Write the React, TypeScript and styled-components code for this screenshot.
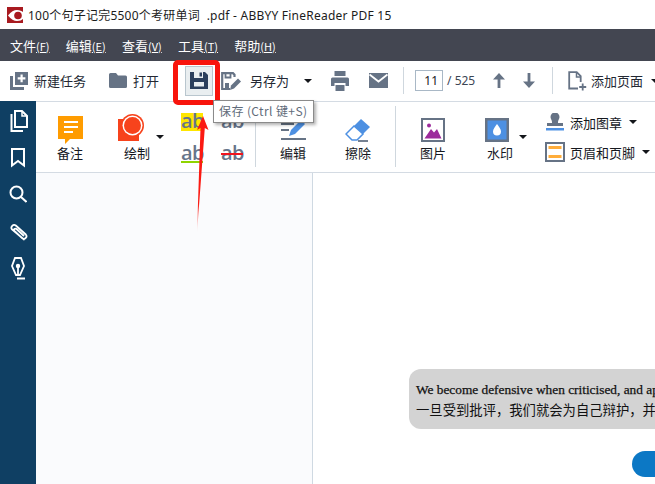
import React from 'react';
import styled, { createGlobalStyle } from 'styled-components';

const UI_FONT = '"Noto Sans CJK SC", "Noto Sans", sans-serif';

const GlobalStyle = createGlobalStyle`
  html, body {
    margin: 0;
    padding: 0;
    background: #fff;
    overflow: hidden;
  }
  body {
    font-family: ${UI_FONT};
  }
`;

const Window = styled.div`
  position: relative;
  width: 655px;
  height: 484px;
  overflow: hidden;
  display: flex;
  flex-direction: column;
`;

const TitleBar = styled.div`
  height: 29px;
  flex: none;
  display: flex;
  align-items: center;
  gap: 5px;
  padding-left: 7px;
  font-family: "Noto Sans", ${UI_FONT};
  font-size: 12px;
  letter-spacing: 0.23px;
  color: #1c1c1c;
  white-space: pre;
`;

const MenuBar = styled.div`
  height: 32px;
  flex: none;
  background: #434651;
  display: flex;
  align-items: center;
  gap: 16.25px;
  padding-left: 10px;
`;

const MenuItem = styled.span`
  color: #fff;
  font-size: 13px;
  white-space: nowrap;
  u {
    text-decoration: underline;
    font-size: 11px;
  }
`;

const Toolbar = styled.div`
  height: 40px;
  flex: none;
  box-sizing: border-box;
  padding: 0 0 1px 10px;
  display: flex;
  align-items: center;
  white-space: nowrap;
`;

const ToolItem = styled.div<{ $left?: number; $gap?: number }>`
  display: flex;
  align-items: center;
  flex: none;
  gap: ${(p) => p.$gap ?? 6}px;
  margin-left: ${(p) => p.$left ?? 0}px;
  font-size: 13px;
  color: #232833;
`;

const SaveButton = styled.div`
  flex: none;
  width: 28px;
  height: 30px;
  margin-left: 26px;
  box-sizing: border-box;
  background: #e9eef0;
  border: 1px solid #b9c6ce;
  display: flex;
  align-items: center;
  justify-content: center;
`;

const Caret = styled.span<{ $left?: number }>`
  flex: none;
  width: 0;
  height: 0;
  margin-left: ${(p) => p.$left ?? 0}px;
  border-left: 4px solid transparent;
  border-right: 4px solid transparent;
  border-top: 4px solid #14161b;
`;

const ToolDivider = styled.span<{ $left: number }>`
  flex: none;
  width: 1px;
  height: 27px;
  margin-left: ${(p) => p.$left}px;
  background: #cfd7de;
`;

const PageInput = styled.div`
  flex: none;
  width: 28px;
  height: 21px;
  margin-left: 11px;
  box-sizing: border-box;
  border: 1px solid #a9b8c6;
  font-family: "Noto Sans", sans-serif;
  font-size: 12px;
  line-height: 19px;
  text-align: right;
  padding-right: 4px;
  color: #222;
`;

const PageCount = styled.span`
  flex: none;
  margin-left: 4px;
  width: 26px;
  font-family: "Noto Sans", sans-serif;
  font-size: 12px;
  color: #3c4554;
`;

const Workspace = styled.div`
  flex: 1;
  display: flex;
  min-height: 0;
`;

const Sidebar = styled.div`
  width: 36px;
  flex: none;
  background: #0f3f63;
  display: flex;
  flex-direction: column;
  align-items: center;
  padding-top: 9px;
`;

const SideIcon = styled.div<{ $top?: number }>`
  display: flex;
  margin-top: ${(p) => p.$top ?? 0}px;
`;

const Main = styled.div`
  flex: 1;
  display: flex;
  flex-direction: column;
  min-width: 0;
`;

const Ribbon = styled.div`
  height: 72px;
  flex: none;
  box-sizing: border-box;
  border-top: 1px solid #d4dbe3;
  border-bottom: 1px solid #d4dbe3;
  display: flex;
  white-space: nowrap;
`;

const RibbonTool = styled.div<{ $width: number; $left: number }>`
  flex: none;
  width: ${(p) => p.$width}px;
  margin-left: ${(p) => p.$left}px;
  height: 100%;
  box-sizing: border-box;
  padding-top: 13px;
  display: flex;
  flex-direction: column;
  align-items: center;
`;

const RibbonIcon = styled.div<{ $aside?: number; $lift?: number }>`
  height: 30px;
  margin: ${(p) => -(p.$lift ?? 0)}px ${(p) => p.$aside ?? 0}px ${(p) => p.$lift ?? 0}px 0;
  display: flex;
  align-items: center;
  justify-content: center;
`;

const RibbonLabel = styled.span`
  margin-top: -1px;
  font-size: 13px;
  line-height: 18px;
  color: #15181e;
`;

const RibbonCaret = styled(Caret)`
  align-self: flex-start;
  margin-top: 33px;
`;

const RibbonDivider = styled.span<{ $left: number }>`
  flex: none;
  width: 1px;
  height: 61px;
  margin: 4px 0 0 ${(p) => p.$left}px;
  background: #cfd7de;
`;

const TextStyles = styled.div`
  flex: none;
  align-self: flex-start;
  margin: 11px 0 0 17px;
  display: grid;
  grid-template-columns: 22px 22px;
  column-gap: 18px;
  row-gap: 14px;
`;

const Sample = styled.span<{ $mark?: boolean; $under?: boolean; $strike?: boolean }>`
  position: relative;
  display: block;
  height: 18px;
  box-sizing: border-box;
  font-family: "Open Sans", "Noto Sans", sans-serif;
  font-size: 20px;
  font-weight: 600;
  line-height: 16px;
  text-align: center;
  letter-spacing: -0.5px;
  color: #67758a;
  background: ${(p) => (p.$mark ? '#ffe600' : 'transparent')};
  border-bottom: ${(p) => (p.$under ? '2px solid #8fd400' : 'none')};
  &::after {
    content: '';
    display: ${(p) => (p.$strike ? 'block' : 'none')};
    position: absolute;
    left: 0;
    right: 0;
    top: 8px;
    height: 2px;
    background: #f0141e;
  }
`;

const StackedTools = styled.div`
  flex: none;
  margin: 7px 0 0 18px;
  display: flex;
  flex-direction: column;
  gap: 4px;
`;

const StackedRow = styled.div`
  display: flex;
  align-items: center;
  height: 26px;
  gap: 5px;
  font-size: 13px;
  color: #15181e;
`;

const StackedIcon = styled.span`
  flex: none;
  width: 20px;
  display: flex;
  justify-content: center;
`;

const Body = styled.div`
  flex: 1;
  display: flex;
  min-height: 0;
`;

const ThumbPanel = styled.div`
  width: 276px;
  flex: none;
  background: #fafbfd;
  border-right: 1px solid #cfd9e2;
`;

const Page = styled.div`
  flex: 1;
  min-width: 0;
  background: #fff;
  overflow: hidden;
  padding-top: 196px;
  padding-left: 96px;
`;

const SentenceCard = styled.div`
  width: 420px;
  height: 60px;
  box-sizing: border-box;
  background: #d3d3d3;
  border-radius: 12px;
  padding: 11px 0 0 7px;
  color: #111;
  white-space: nowrap;
`;

const English = styled.div`
  font-family: "Liberation Serif", serif;
  font-size: 13.33px;
  line-height: 19px;
  -webkit-text-stroke: 0.25px #111;
`;

const Chinese = styled.div`
  font-family: "Noto Sans CJK SC", serif;
  font-size: 13.33px;
  line-height: 21px;
`;

const ActionPill = styled.div`
  width: 80px;
  height: 26px;
  margin: 22px 0 0 223px;
  border-radius: 13px;
  background: #0c78c5;
`;

const SaveHighlight = styled.div`
  position: absolute;
  left: 173px;
  top: 60px;
  width: 47px;
  height: 45px;
  box-sizing: border-box;
  border: 5px solid #f8140c;
  border-radius: 5px;
`;

const Tooltip = styled.div`
  position: absolute;
  left: 213px;
  top: 100px;
  width: 101px;
  height: 23px;
  box-sizing: border-box;
  background: #fff;
  border: 1px solid #8b8b8b;
  box-shadow: 2px 2px 3px rgba(0, 0, 0, 0.3);
  font-size: 12px;
  letter-spacing: 0.4px;
  line-height: 20px;
  padding-left: 5px;
  color: #5f6b7a;
  white-space: pre;
`;

const ArrowOverlay = styled.svg`
  position: absolute;
  left: 190px;
  top: 106px;
`;

const GRAY = '#667385';
const NAVY = '#2b3f5c';

const NewTaskIcon = () => (
  <svg width="18" height="18" viewBox="0 0 18 18">
    <path d="M0 4h3v11h11v3H0z" fill={GRAY} />
    <path fillRule="evenodd" d="M5 0h13v13H5zM10.500 2.500v2.700H7.700v2.300h2.800v2.800h2.200V7.500h2.700V5.200h-2.700V2.500z" fill={GRAY} />
  </svg>
);

const FolderIcon = () => (
  <svg width="18" height="15" viewBox="0 0 18 15">
    <path d="M0 1.500A1.500 1.500 0 0 1 1.500 0H7l2 2.500h7.500A1.500 1.500 0 0 1 18 4v9.500a1.500 1.500 0 0 1-1.500 1.500h-15A1.500 1.500 0 0 1 0 13.500z" fill={GRAY} />
  </svg>
);

// Floppy with a slotted shutter on top and a pale label below
const FloppyIcon = () => (
  <svg width="18" height="17" viewBox="0 0 18 17">
    <path d="M0 0h15l3 3v14H0z" fill={NAVY} />
    <path d="M4 0h9v6H4z" fill="#e9eef0" />
    <path d="M9.500 0.500h2.500v4H9.500z" fill={NAVY} />
    <path d="M4 10h10v4.500H4z" fill="#e9eef0" />
  </svg>
);

const SaveAsIcon = () => (
  <svg width="20" height="20" viewBox="0 0 20 20" fill="none">
    <path d="M9 18H1.200V2.200H12l1.500 1.500V6" stroke={GRAY} strokeWidth="2.200" />
    <path d="M4.500 2v4.500h5V2" stroke={GRAY} strokeWidth="1.800" />
    <path d="M4 12h4v6H4z" fill={GRAY} />
    <path d="M9 19l1-4.500 7-7 3 3-7 7z" fill={GRAY} />
  </svg>
);

const PrintIcon = () => (
  <svg width="18" height="20" viewBox="0 0 18 20">
    <path fillRule="evenodd" d="M3.500 0h11v5h-11zM1.500 6.500h15A1.500 1.500 0 0 1 18 8v7h-3.500v-3h-11v3H0V8a1.500 1.500 0 0 1 1.500-1.500z" fill={GRAY} />
    <path d="M4.500 14h9v6h-9z" fill={GRAY} />
  </svg>
);

const MailIcon = () => (
  <svg width="19" height="15" viewBox="0 0 19 15">
    <path d="M0 0h19v15H0z" fill={GRAY} />
    <path d="M0.500 1.500l9 7 9-7" fill="none" stroke="#fff" strokeWidth="1.800" />
  </svg>
);

const VerticalArrow = ({ down }: { down?: boolean }) => (
  <svg width="12" height="15" viewBox="0 0 12 15">
    <g transform={down ? 'rotate(180 6 7.500)' : undefined}>
      <path d="M6 0l6 6.500H7.400V15H4.600V6.500H0z" fill={GRAY} />
    </g>
  </svg>
);

const AddPageIcon = () => (
  <svg width="20" height="20" viewBox="0 0 20 20" fill="none">
    <path d="M10 17.500H1.200V1.200h7.500l4 4V11" stroke={GRAY} strokeWidth="1.800" />
    <path d="M8.500 1.500v4.500h4" stroke={GRAY} strokeWidth="1.500" />
    <path d="M14.700 12.500v7M11.200 16h7" stroke={GRAY} strokeWidth="1.800" />
  </svg>
);

const NoteIcon = () => (
  <svg width="25" height="28" viewBox="0 0 25 28">
    <path d="M0 0h25v23H12l-5 5v-5H0z" fill="#ff9c00" />
    <path d="M6 6h14M6 11h14M6 16h9" stroke="#fff" strokeWidth="2" />
  </svg>
);

// Square and ringed circle, the ring is red outside and white inside
const DrawIcon = () => (
  <svg width="27" height="27" viewBox="0 0 27 27">
    <path d="M0 5h21v22H0z" fill="#f7431c" />
    <circle cx="14.500" cy="11.500" r="11.500" fill="#f7431c" />
    <circle cx="14.500" cy="11.500" r="10" fill="#fff" />
    <circle cx="14.500" cy="11.500" r="8.500" fill="#f7431c" />
  </svg>
);

const EditIcon = () => (
  <svg width="25" height="23" viewBox="0 0 25 23">
    <path d="M0 5h13M0 11h8M0 20h25" stroke={GRAY} strokeWidth="2" />
    <path d="M8 17l2-6L20 1l4 4-10 10z" fill="#4d90e2" />
  </svg>
);

const EraserIcon = () => (
  <svg width="26" height="25" viewBox="0 0 26 25">
    <path d="M16 1l9 8-7 7-9-8z" fill="#4d90e2" />
    <path d="M9 8l9 8-6 6H7l-6-6z" fill="#fff" stroke="#4d90e2" strokeWidth="1.500" />
    <path d="M13 23h10" stroke={GRAY} strokeWidth="1.800" />
  </svg>
);

const ImageIcon = () => (
  <svg width="24" height="24" viewBox="0 0 24 24">
    <path d="M1 1h22v22H1z" fill="#fff" stroke={GRAY} strokeWidth="2" />
    <circle cx="8" cy="7.500" r="2" fill="#9c2b9c" />
    <path d="M3.500 20.500L10 11l3 3.500 3-3.500 4.500 9.500z" fill="#9c2b9c" />
  </svg>
);

const WatermarkIcon = () => (
  <svg width="24" height="24" viewBox="0 0 24 24">
    <path d="M1.250 1.250h21.500v21.500H1.250z" fill="#4d90e2" stroke={GRAY} strokeWidth="2.500" />
    <path d="M12 6c2 3 4 5 4 7.500a4 4 0 0 1-8 0C8 11 10 9 12 6z" fill="#fff" />
  </svg>
);

const StampIcon = () => (
  <svg width="18" height="18" viewBox="0 0 18 18">
    <path d="M6 9c0-2-1.500-3-1.500-5a4.500 4.500 0 0 1 9 0c0 2-1.500 3-1.500 5v1h5v3H1v-3h5z" fill={GRAY} />
    <path d="M0 15h18v2.500H0z" fill="#4d90e2" />
  </svg>
);

const HeaderFooterIcon = () => (
  <svg width="20" height="20" viewBox="0 0 20 20">
    <path d="M1 1h18v18H1z" fill="#fff" stroke={GRAY} strokeWidth="2" />
    <path d="M3.500 4h13v3h-13zM3.500 13h13v3h-13z" fill="#ffad3b" />
  </svg>
);

const PagesIcon = () => (
  <svg width="19" height="22" viewBox="0 0 19 22" fill="none" stroke="#fff" strokeWidth="2">
    <path d="M6 1h7l5 5v11H6z" />
    <path d="M13 1v5h5" strokeWidth="1.500" />
    <path d="M2.500 4v17H14" />
  </svg>
);

const BookmarkIcon = () => (
  <svg width="14" height="20" viewBox="0 0 14 20" fill="none" stroke="#fff" strokeWidth="2">
    <path d="M1 1h12v16.500L7 13l-6 4.500z" />
  </svg>
);

const SearchIcon = () => (
  <svg width="18" height="18" viewBox="0 0 18 18" fill="none" stroke="#fff" strokeWidth="2">
    <circle cx="7.500" cy="7.500" r="6" />
    <path d="M12 12l5.500 5" />
  </svg>
);

const ClipIcon = () => (
  <svg width="19" height="18" viewBox="0 0 19 18" fill="none" stroke="#fff" strokeWidth="1.800" strokeLinecap="round">
    <path d="M15 16.500L3 6.500a2.800 2.800 0 0 1 3.800-4l10 9a2.600 2.600 0 0 1-3.500 3.800L5.500 8a1.300 1.300 0 0 1 2-2l7 6.500" />
  </svg>
);

const NibIcon = () => (
  <svg width="14" height="23" viewBox="0 0 14 23" fill="none" stroke="#fff" strokeWidth="1.800">
    <path d="M4 1h6l3 8-4 9H5L1 9z" />
    <path d="M7 9v9" />
    <circle cx="7" cy="9" r="1.300" fill="#fff" />
    <path d="M6 21.500h8" strokeWidth="2" />
  </svg>
);

const AppLogo = () => (
  <svg width="16" height="16" viewBox="0 0 16 16">
    <path d="M0 0h16v16H0z" fill="#a81a20" />
    <path d="M1 8.500C4 4.500 7 3 10 3s4.500 1 6 2v7c-1.500 1-3 2-6 2S4 12.500 1 8.500z" fill="#fff" />
    <circle cx="11" cy="8.500" r="3.800" fill="#a81a20" />
  </svg>
);

const menus = [
  ['文件', '(F)'],
  ['编辑', '(E)'],
  ['查看', '(V)'],
  ['工具', '(T)'],
  ['帮助', '(H)'],
];

const App: React.FC = () => {
  return (
    <Window>
      <GlobalStyle />
      <TitleBar>
        <AppLogo />
        <span>100个句子记完5500个考研单词  .pdf - ABBYY FineReader PDF 15</span>
      </TitleBar>
      <MenuBar>
        {menus.map(([name, key]) => (
          <MenuItem key={key}>
            {name}
            <u>{key}</u>
          </MenuItem>
        ))}
      </MenuBar>
      <Toolbar>
        <ToolItem>
          <NewTaskIcon />
          新建任务
        </ToolItem>
        <ToolItem $left={23}>
          <FolderIcon />
          打开
        </ToolItem>
        <SaveButton>
          <FloppyIcon />
        </SaveButton>
        <ToolItem $left={8} $gap={9}>
          <SaveAsIcon />
          另存为
        </ToolItem>
        <Caret $left={15} />
        <ToolItem $left={19}>
          <PrintIcon />
        </ToolItem>
        <ToolItem $left={20}>
          <MailIcon />
        </ToolItem>
        <ToolDivider $left={15} />
        <PageInput>11</PageInput>
        <PageCount>/ 525</PageCount>
        <ToolItem $left={20}>
          <VerticalArrow />
        </ToolItem>
        <ToolItem $left={18}>
          <VerticalArrow down />
        </ToolItem>
        <ToolDivider $left={17} />
        <ToolItem $left={15} $gap={3}>
          <AddPageIcon />
          添加页面
        </ToolItem>
        <Caret $left={8} />
      </Toolbar>
      <Workspace>
        <Sidebar>
          <SideIcon>
            <PagesIcon />
          </SideIcon>
          <SideIcon $top={16}>
            <BookmarkIcon />
          </SideIcon>
          <SideIcon $top={17}>
            <SearchIcon />
          </SideIcon>
          <SideIcon $top={20}>
            <ClipIcon />
          </SideIcon>
          <SideIcon $top={16}>
            <NibIcon />
          </SideIcon>
        </Sidebar>
        <Main>
          <Ribbon>
            <RibbonTool $width={40} $left={14}>
              <RibbonIcon>
                <NoteIcon />
              </RibbonIcon>
              <RibbonLabel>备注</RibbonLabel>
            </RibbonTool>
            <RibbonTool $width={40} $left={27}>
              <RibbonIcon $aside={12} $lift={3}>
                <DrawIcon />
              </RibbonIcon>
              <RibbonLabel>绘制</RibbonLabel>
            </RibbonTool>
            <RibbonCaret $left={-1} />
            <TextStyles>
              <Sample $mark>ab</Sample>
              <Sample>ab</Sample>
              <Sample $under>ab</Sample>
              <Sample $strike>ab</Sample>
            </TextStyles>
            <RibbonDivider $left={12} />
            <RibbonTool $width={40} $left={17}>
              <RibbonIcon>
                <EditIcon />
              </RibbonIcon>
              <RibbonLabel>编辑</RibbonLabel>
            </RibbonTool>
            <RibbonTool $width={40} $left={25}>
              <RibbonIcon>
                <EraserIcon />
              </RibbonIcon>
              <RibbonLabel>擦除</RibbonLabel>
            </RibbonTool>
            <RibbonDivider $left={17} />
            <RibbonTool $width={40} $left={17}>
              <RibbonIcon>
                <ImageIcon />
              </RibbonIcon>
              <RibbonLabel>图片</RibbonLabel>
            </RibbonTool>
            <RibbonTool $width={40} $left={27}>
              <RibbonIcon $aside={6}>
                <WatermarkIcon />
              </RibbonIcon>
              <RibbonLabel>水印</RibbonLabel>
            </RibbonTool>
            <RibbonCaret $left={-1} />
            <StackedTools>
              <StackedRow>
                <StackedIcon>
                  <StampIcon />
                </StackedIcon>
                添加图章
                <Caret $left={2} />
              </StackedRow>
              <StackedRow>
                <StackedIcon>
                  <HeaderFooterIcon />
                </StackedIcon>
                页眉和页脚
                <Caret $left={2} />
              </StackedRow>
            </StackedTools>
          </Ribbon>
          <Body>
            <ThumbPanel />
            <Page>
              <SentenceCard>
                <English>We become defensive when criticised, and apologise</English>
                <Chinese>一旦受到批评，我们就会为自己辩护，并道歉</Chinese>
              </SentenceCard>
              <ActionPill />
            </Page>
          </Body>
        </Main>
      </Workspace>
      <SaveHighlight />
      <Tooltip>保存 (Ctrl 键+S)</Tooltip>
      <ArrowOverlay width="24" height="130" viewBox="0 0 24 130">
        <defs>
          <linearGradient id="arrow-fade" x1="0" y1="0" x2="0" y2="1">
            <stop offset="0" stopColor="#fb1a12" />
            <stop offset="0.75" stopColor="#fb1a12" />
            <stop offset="1" stopColor="#fb1a12" stopOpacity="0" />
          </linearGradient>
        </defs>
        <path d="M7 127L10.500 22 7 24 13 10 18.500 24 14.800 22z" fill="url(#arrow-fade)" />
      </ArrowOverlay>
    </Window>
  );
};

export default App;
